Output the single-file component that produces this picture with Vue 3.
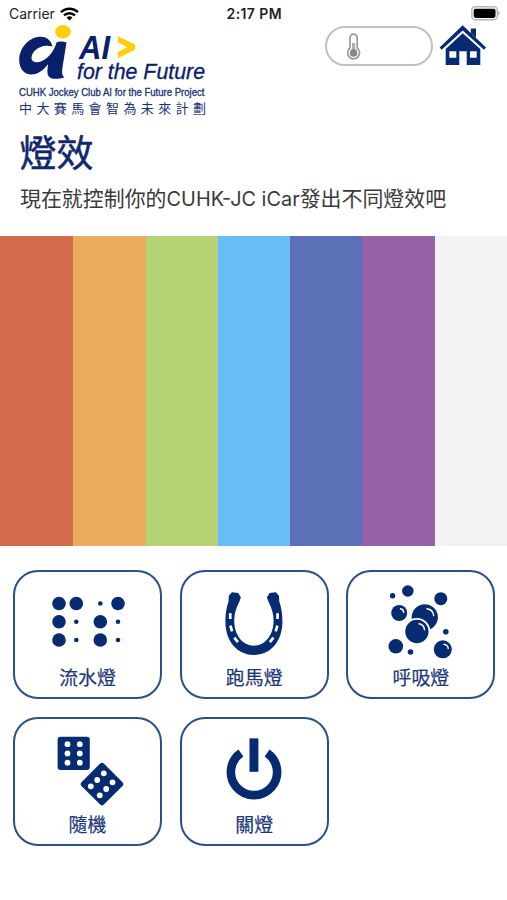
<script setup>
const stripes = ['#d36b4c', '#e9ad5d', '#b5d274', '#67bdf5', '#5c70b8', '#9661a5', '#f2f2f2']

const bigDots = [[59, 603.5], [76.3, 603.5], [118, 603.5], [59, 621.7], [100.3, 621.7], [59, 640], [100.3, 640]]
const smallDots = [[100.3, 603.5], [76.3, 621.7], [118, 621.7], [76.3, 640], [118, 640]]
const bubbles = [
  [393.1, 595.7, 2.7], [408.3, 591, 5.8], [441.3, 598.7, 6.5], [399.7, 613, 8], [446.3, 631.7, 2.8],
  [396.3, 646.3, 7.3], [411, 652, 2.8], [443.3, 649.3, 9],
]
const diceDots = [
  [67, 744.2], [79.3, 744.2], [67, 753.5], [79.3, 753.5], [67, 762.7], [79.3, 762.7],
  [103.3, 773.3], [96.7, 780], [90.3, 786.3], [112, 782.3], [105.7, 789], [99.3, 795.3],
]
const modes = [
  { id: 'flow', label: '流水燈', box: '13 570 149 90' },
  { id: 'horse', label: '跑馬燈', box: '179.5 570 149 90' },
  { id: 'breathe', label: '呼吸燈', box: '346.5 570 149 90' },
  { id: 'random', label: '隨機', box: '12.5 717 149 90' },
  { id: 'off', label: '關燈', box: '179.5 716.5 149 90' },
]
</script>

<template>
  <main class="screen">
    <div class="status">
      <div class="carrier">
        <span>Carrier</span>
        <svg width="19" height="14" viewBox="0 0 19 14">
          <g fill="none" stroke="#000" stroke-width="2.5">
            <path d="M1 5.2C5.8.5 13.2.5 18 5.2" />
            <path d="M4 8.4C7.2 5.4 11.8 5.4 15 8.4" />
          </g>
          <path d="M6.5 10.6q3-2.5 6 0l-3 3z" />
        </svg>
      </div>
      <span class="time">2:17 PM</span>
      <svg class="battery" width="30" height="15" viewBox="0 0 30 15">
        <rect x=".8" y=".8" width="25.5" height="13" rx="3.5" fill="#fff" stroke="#b5b5b5" stroke-width="1.4" />
        <rect x="2.7" y="2.7" width="21.8" height="9.2" rx="1.8" />
        <path d="M27.3 4.8q2.5 2.5 0 5z" fill="#999" />
      </svg>
    </div>

    <header class="header">
      <svg class="logo" width="200" height="96" viewBox="14 22 200 96">
        <path fill="#08206b" d="M52.5 46.6C50.8 39 45 36.3 39.5 36.8C28 38 19.2 48.5 19.2 60C19.3 69 24.3 74.6 31.5 74.5C38 74.4 43.5 70.2 48.2 64C47.2 70 46.9 74.2 49 76.7C52 79.8 58.5 79 64.5 77.4C61.4 75.4 62 71.5 62.7 66L66.5 42.4C63.5 41.4 59 41.3 56.5 42.4C54.5 50.5 48.5 57.8 42 61C36.5 63.6 31.3 62.2 31.5 57.5C31.8 51.5 39 46.2 45.8 45.8C48.4 45.6 50.5 45.8 52.5 46.6Z" />
        <ellipse cx="63" cy="31.8" rx="7.9" ry="6.8" fill="#fdcf0b" />
        <text class="ai" x="79" y="58.8" textLength="31" lengthAdjust="spacingAndGlyphs">AI</text>
        <path fill="#fdcf0b" d="M118 36.2L135.2 44.6V49.6L118 58.2V52L127.4 47.2L118 42.5Z" />
        <text class="future" x="77" y="79.4" textLength="128" lengthAdjust="spacingAndGlyphs">for the Future</text>
        <text class="project" x="19" y="96.2" textLength="185.5" lengthAdjust="spacingAndGlyphs">CUHK Jockey Club AI for the Future Project</text>
        <text class="plan" x="19" y="112.7" textLength="187">中大賽馬會智為未來計劃</text>
      </svg>
      <div class="tools">
        <div class="temperature">
          <svg width="16" height="28" viewBox="345 31 16 28">
            <path d="M350 47V36.7a3.6 3.6 0 0 1 7.2 0V47a6 6 0 1 1-7.2 0Z" fill="#fff" stroke="#999" stroke-width="1.7" />
            <path d="M353.6 42v8" stroke="#aaa" stroke-width="3" />
            <circle cx="353.6" cy="51.9" r="3.8" fill="#888" />
          </svg>
        </div>
        <svg class="home" width="48" height="42" viewBox="439 24 48 42">
          <g fill="#062b70">
            <path d="M462.7 25.3L486 47.6L484 49.7L462.7 30.5L441.7 49.7L439.6 47.6Z" />
            <path d="M470.8 28.6H476V38L470.8 33Z" />
            <path fill-rule="evenodd" d="M462.7 33.2L480.3 49V65H466.7V51.2H459.3V65H445.7V49ZM449.3 51.2V57.7H456.3V51.2ZM470 51.2V57.7H476.7V51.2Z" />
          </g>
        </svg>
      </div>
    </header>

    <h1 class="title">燈效</h1>
    <p class="lead">現在就控制你的<span class="latin">CUHK-JC iCar</span>發出不同燈效吧</p>

    <div class="stripes">
      <div v-for="c in stripes" :key="c" :style="{ background: c }"></div>
    </div>

    <div class="modes">
      <button v-for="m in modes" :key="m.id" class="mode">
        <svg class="icon" width="149" height="90" :viewBox="m.box" fill="#062b70">
          <template v-if="m.id === 'flow'">
            <circle v-for="(d, i) in bigDots" :key="'b' + i" :cx="d[0]" :cy="d[1]" r="6.8" />
            <circle v-for="(d, i) in smallDots" :key="'s' + i" :cx="d[0]" :cy="d[1]" r="2.3" />
          </template>
          <template v-else-if="m.id === 'horse'">
            <path d="M228.4 595.8L231.4 592.2L237.8 593L240.4 597.4L238.4 602.7C235.4 608.5 233.7 614 233.7 620.5C233.7 635 242 645.7 253.4 645.7S273.1 635 273.1 620.5C273.1 614 271.4 608.5 268.4 602.7L266.4 597.4L269 593L275.4 592.2L278.4 595.8L278.8 601.5C281 608 281.9 614 281.9 621.5C281.9 641.5 269.8 655 253.4 655S224.9 641.5 224.9 621.5C224.9 614 225.8 608 228 601.5Z" />
            <g fill="#fff">
              <rect x="228.4" y="613.2" width="2.7" height="5.8" />
              <rect x="229.4" y="625.6" width="2.7" height="5.8" transform="rotate(-16 230.8 628.5)" />
              <rect x="234.3" y="637" width="2.7" height="5.8" transform="rotate(-38 235.6 639.9)" />
              <rect x="275.7" y="613.2" width="2.7" height="5.8" />
              <rect x="274.7" y="625.6" width="2.7" height="5.8" transform="rotate(16 276 628.5)" />
              <rect x="269.8" y="637" width="2.7" height="5.8" transform="rotate(38 271.2 639.9)" />
            </g>
          </template>
          <template v-else-if="m.id === 'breathe'">
            <circle v-for="(b, i) in bubbles" :key="i" :cx="b[0]" :cy="b[1]" :r="b[2]" />
            <circle cx="425.3" cy="617.3" r="13.1" />
            <circle cx="417.4" cy="631.5" r="12.6" stroke="#fff" stroke-width="1.9" />
            <g fill="none" stroke="#fff" stroke-width="1.4" stroke-linecap="round">
              <path d="M401 608.8q3 .6 3.2 3.4" />
              <path d="M427.5 608.8q6 .8 6.7 6.8" />
              <path d="M419.5 623.8q5 .8 5.5 6" />
              <path d="M444.5 644.3q4 .8 4.2 4.2" />
            </g>
          </template>
          <template v-else-if="m.id === 'random'">
            <rect x="57.1" y="736.8" width="32.2" height="33.2" rx="3" />
            <rect x="85.7" y="768.3" width="31.6" height="31.6" rx="2.6" transform="rotate(45 101.5 784.1)" />
            <circle v-for="(d, i) in diceDots" :key="i" :cx="d[0]" :cy="d[1]" r="2.9" fill="#fff" />
          </template>
          <template v-else>
            <path d="M240.4 752.5A23.1 23.1 0 1 0 266.6 752.5" fill="none" stroke="#062b70" stroke-width="8.6" />
            <rect x="249" y="737.9" width="8.9" height="33.4" />
          </template>
        </svg>
        <span class="label">{{ m.label }}</span>
      </button>
    </div>
  </main>
</template>

<style>
body {
  margin: 0;
  background: #fff;
}
</style>

<style scoped>
.screen {
  width: 507px;
  height: 900px;
  overflow: hidden;
  background: #fff;
  font-family: Inter, "Noto Sans CJK TC", sans-serif;
}
.status {
  display: grid;
  grid-template-columns: 1fr auto 1fr;
  align-items: center;
  box-sizing: border-box;
  height: 26px;
  padding: 1px 6.5px 0 9px;
  color: #222;
}
.carrier {
  display: flex;
  align-items: center;
  gap: 5px;
  font-size: 14px;
}
.time {
  margin-right: 1px;
  font-weight: 600;
  font-size: 14px;
  letter-spacing: 0.4px;
}
.battery {
  justify-self: end;
}
.header {
  display: flex;
  justify-content: space-between;
  height: 92px;
  padding: 0 20px 0 14px;
}
.logo {
  margin-top: -4px;
}
.ai {
  font: italic bold 33px "Liberation Sans", sans-serif;
  fill: #08206b;
}
.future {
  font: italic 21.5px "Liberation Sans", sans-serif;
  fill: #08206b;
  stroke: #08206b;
  stroke-width: 0.3px;
}
.project {
  font: 10.3px "Liberation Sans", sans-serif;
  fill: #1b2f76;
  stroke: #1b2f76;
  stroke-width: 0.3px;
}
.plan {
  font: 13px "Noto Sans CJK TC", sans-serif;
  fill: #1b2f76;
}
.tools {
  display: flex;
  gap: 6px;
}
.temperature {
  box-sizing: border-box;
  width: 108px;
  height: 40px;
  padding: 4px 0 0 17.5px;
  border: 2px solid #c0c0c0;
  border-radius: 20px;
}
.home {
  margin-top: -2px;
}
.title {
  margin: 11px 0 0 19.5px;
  font-size: 37px;
  line-height: 50px;
  font-weight: 400;
  color: #10276c;
  -webkit-text-stroke: 0.5px #10276c;
}
.lead {
  margin: 4px 0 0 20px;
  font-size: 20.95px;
  line-height: 32px;
  height: 52.6px;
  white-space: nowrap;
  color: #3a3a3a;
}
.latin {
  font-size: 19.9px;
}
.stripes {
  display: grid;
  grid-template-columns: 73px 73px 72px 72px 72px 73px 72px;
  height: 310px;
}
.modes {
  display: grid;
  grid-template-columns: repeat(3, 149px);
  grid-auto-rows: 129px;
  gap: 18px 17.7px;
  padding: 24.4px 0 0 13px;
}
.mode {
  display: flex;
  flex-direction: column;
  align-items: center;
  box-sizing: border-box;
  padding: 0;
  border: 2px solid #2b4f88;
  border-radius: 25px;
  background: #fff;
  font-family: inherit;
}
.icon {
  flex: none;
  margin-top: -2px;
}
.label {
  margin-top: 5px;
  font-size: 18.9px;
  line-height: 28px;
  color: #1c3878;
  -webkit-text-stroke: 0.2px #1c3878;
}
</style>
